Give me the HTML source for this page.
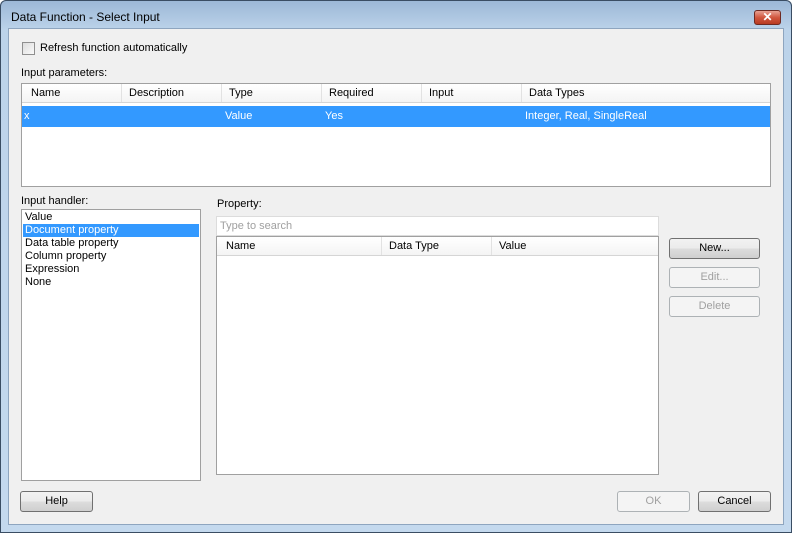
<!DOCTYPE html>
<html><head><style>
*{box-sizing:border-box;margin:0;padding:0}
body{width:792px;height:533px;overflow:hidden;font-family:"Liberation Sans",sans-serif;font-size:11px;color:#000;background:#fff}
.win{position:absolute;left:0;top:0;width:792px;height:533px;box-shadow:inset 0 0 0 1px #3a4d63;border-radius:6px 6px 0 0;background:linear-gradient(#9bb7d6,#bcd3ea 30px,#c4d9ee);}
.client{position:absolute;left:8px;top:28px;width:776px;height:497px;background:#f0f0f0;border:1px solid #8ea5bf}
.a{position:absolute}
.box{position:absolute;background:#fff;border:1px solid #a0a0a0}
.hdr{position:absolute;height:19px;background:linear-gradient(#fff,#f4f4f4);border-bottom:1px solid #d5d5d5}
.hdr span{position:absolute;top:3px}
.sep{position:absolute;top:0;width:1px;height:18px;background:#e2e2e2}
.btn{position:absolute;height:21px;border:1px solid #707070;border-radius:3px;background:linear-gradient(#f2f2f2 0,#ebebeb 50%,#dddddd 50%,#cfcfcf);text-align:center;line-height:19px}
.dis{border-color:#adb2b5;background:#f4f4f4;color:#a0a0a0}
</style></head><body>
<div class="win">
<div class="a" style="left:11px;top:10px;font-size:12px">Data Function - Select Input</div>
<div class="a" style="left:754px;top:10px;width:27px;height:15px;border:1px solid #6e2a22;border-radius:3px;background:linear-gradient(#e8a193,#d1573f 50%,#b83b22);color:#fff;font-weight:bold;text-align:center;line-height:13px;font-size:12px">✕</div>
<div class="client"></div>
<div class="a" style="left:22px;top:42px;width:13px;height:13px;border:1px solid #8f8f8f;background:linear-gradient(135deg,#dcdcdc,#fafafa)"></div>
<div class="a" style="left:40px;top:42px">Refresh function automatically</div>
<div class="a" style="left:21px;top:67px">Input parameters:</div>
<div class="box" style="left:21px;top:83px;width:750px;height:104px">
 <div class="hdr" style="left:0;top:0;width:748px">
  <span style="left:9px">Name</span><span style="left:107px">Description</span><span style="left:207px">Type</span><span style="left:307px">Required</span><span style="left:407px">Input</span><span style="left:507px">Data Types</span>
  <div class="sep" style="left:99px"></div><div class="sep" style="left:199px"></div><div class="sep" style="left:299px"></div><div class="sep" style="left:399px"></div><div class="sep" style="left:499px"></div>
 </div>
 <div class="a" style="left:0;top:22px;width:748px;height:21px;background:#3399ff;color:#fff">
  <span class="a" style="left:2px;top:4px">x</span><span class="a" style="left:203px;top:4px">Value</span><span class="a" style="left:303px;top:4px">Yes</span><span class="a" style="left:503px;top:4px">Integer, Real, SingleReal</span>
 </div>
</div>
<div class="a" style="left:21px;top:195px">Input handler:</div>
<div class="box" style="left:21px;top:209px;width:180px;height:272px">
 <div style="padding-left:3px;line-height:13px;margin-top:1px">Value</div>
 <div style="margin-left:1px;width:176px;background:#3399ff;color:#fff;padding-left:2px;line-height:13px">Document property</div>
 <div style="padding-left:3px;line-height:13px">Data table property</div>
 <div style="padding-left:3px;line-height:13px">Column property</div>
 <div style="padding-left:3px;line-height:13px">Expression</div>
 <div style="padding-left:3px;line-height:13px">None</div>
</div>
<div class="a" style="left:217px;top:198px">Property:</div>
<div class="box" style="left:216px;top:216px;width:443px;height:20px;border-color:#dcdcdc;color:#a0a0a0;padding:3px 0 0 3px">Type to search</div>
<div class="box" style="left:216px;top:236px;width:443px;height:239px">
 <div class="hdr" style="left:0;top:0;width:441px">
  <span style="left:9px">Name</span><span style="left:172px">Data Type</span><span style="left:282px">Value</span>
  <div class="sep" style="left:164px"></div><div class="sep" style="left:274px"></div>
 </div>
</div>
<div class="btn" style="left:669px;top:238px;width:91px">New...</div>
<div class="btn dis" style="left:669px;top:267px;width:91px">Edit...</div>
<div class="btn dis" style="left:669px;top:296px;width:91px">Delete</div>
<div class="btn" style="left:20px;top:491px;width:73px">Help</div>
<div class="btn dis" style="left:617px;top:491px;width:73px">OK</div>
<div class="btn" style="left:698px;top:491px;width:73px">Cancel</div>
</div>
</body></html>
